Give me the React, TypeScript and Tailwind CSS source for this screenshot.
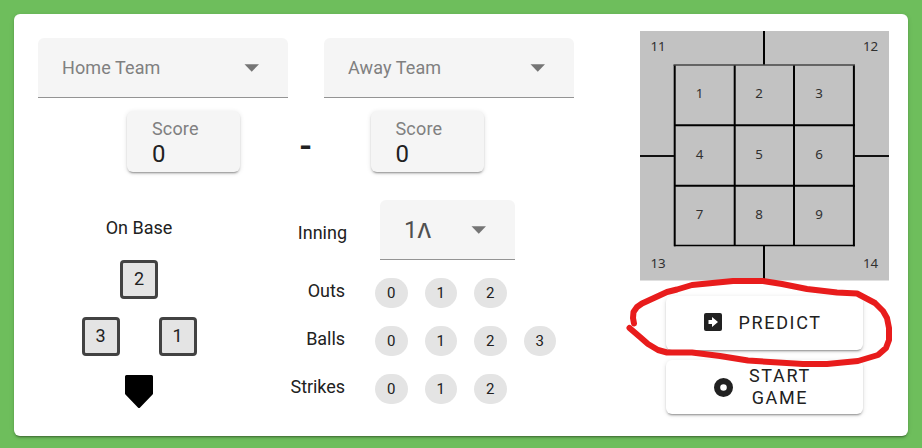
import React from "react";

const shadow =
  "shadow-[0_3px_1px_-2px_rgba(0,0,0,0.2),0_2px_2px_0_rgba(0,0,0,0.14),0_1px_5px_0_rgba(0,0,0,0.12)]";

function Caret() {
  return (
    <svg width="15" height="8" viewBox="0 0 15 8" className="shrink-0">
      <path d="M0.5 0.2h14.5L7.75 7.7z" fill="#757575" />
    </svg>
  );
}

function TeamSelect({ label }: { label: string }) {
  return (
    <div className="flex h-[60px] w-[250px] items-center justify-between rounded-t-md border-b border-[#949494] bg-[#f5f5f5] pr-[29px] pl-6">
      <span className="text-[18px] tracking-[0.1px] text-[#808080]">{label}</span>
      <Caret />
    </div>
  );
}

function ScoreField() {
  return (
    <div className={`flex h-[61px] w-[113px] flex-col rounded-md bg-[#f5f5f5] pt-2 pl-[24.5px] ${shadow}`}>
      <span className="text-[18px] leading-[20px] tracking-[0.2px] text-[#808080]">Score</span>
      <span className="text-[24px] leading-[30px] text-[#212121]">0</span>
    </div>
  );
}

function Base({ n }: { n: number }) {
  return (
    <button className="flex h-[39px] w-[38px] items-center justify-center rounded border-[3px] border-[#424242] bg-[#e4e4e4] pb-[3px] text-[18px]">
      {n}
    </button>
  );
}

function CountRow({ label, count }: { label: string; count: number }) {
  return (
    <div className="flex h-12 items-center">
      <span className="w-[69px] pb-[5px] text-right text-[18px] tracking-[-0.05px]">{label}</span>
      <div className="ml-[30px] flex gap-[17px]">
        {Array.from({ length: count }, (_, i) => (
          <span
            key={i}
            className="flex h-[30px] w-[32.5px] items-center justify-center rounded-full bg-[#e4e4e4] text-[15px]"
          >
            {i}
          </span>
        ))}
      </div>
    </div>
  );
}

function StrikeZone() {
  const labels: [string, number, number][] = [
    ["11", 18, 20], ["12", 230.5, 20], ["13", 18, 237], ["14", 230.5, 237],
    ["1", 59.5, 67], ["2", 119, 67], ["3", 179, 67],
    ["4", 59.5, 127.5], ["5", 119, 127.5], ["6", 179, 127.5],
    ["7", 59.5, 188], ["8", 119, 188], ["9", 179, 188],
  ];
  return (
    <svg width="249" height="250" viewBox="0 0 249 250" className="block">
      <rect width="249" height="249.5" fill="#c2c2c2" />
      <g stroke="#000" strokeWidth="2" fill="none">
        <path d="M34.7 34V215.3M94.7 34V215M154 34V215M213.9 34V215.3M34 94.2H215M34 154.7H215M124 0V34M124 215V250" />
        <path d="M34 214.6H214.8" strokeWidth="1.5" />
        <path d="M33.5 34H215" stroke="#444" strokeWidth="1.7" />
        <path d="M0 125H34M214 125H249" stroke="#111" strokeWidth="1.8" />
      </g>
      <g fill="#303030" fontSize="13.3" fontWeight="400" fontFamily="'Noto Sans','Open Sans',sans-serif" textAnchor="middle">
        {labels.map(([t, x, y]) => (
          <text key={t} x={x} y={y}>{t}</text>
        ))}
      </g>
    </svg>
  );
}

export default function App() {
  return (
    <div className="relative h-[448px] w-[922px] bg-[#6ebe5c] p-[14px] font-['Roboto',sans-serif] text-[#212121]">
      <main className={`flex h-[422px] w-[894px] rounded-md bg-white pl-6 ${shadow}`}>
        <section className="w-[602px] pt-6">
          <div className="flex gap-9">
            <TeamSelect label="Home Team" />
            <TeamSelect label="Away Team" />
          </div>
          <div className="mt-[13px] ml-[89.4px] flex">
            <ScoreField />
            <div className="flex w-[130.6px] justify-center">
              <span className="mt-[18px] text-[36px] leading-[36px] font-medium">-</span>
            </div>
            <ScoreField />
          </div>
          <div className="mt-7 flex">
            <div className="flex w-[202px] flex-col items-center pt-[17px]">
              <h2 className="text-[18px] leading-[22px]">On Base</h2>
              <div className="mt-[21px]"><Base n={2} /></div>
              <div className="mt-[18px] flex gap-[39px]">
                <Base n={3} />
                <Base n={1} />
              </div>
              <svg width="30" height="34" viewBox="0 0 30 34" className="mt-[19px]">
                <path d="M2.5 1.5h25v17L15 31.5 2.5 18.5z" fill="#000" stroke="#000" strokeWidth="3" strokeLinejoin="round" />
              </svg>
            </div>
            <div className="ml-[36px]">
              <div className="flex h-[60px] items-center">
                <span className="w-[71px] pt-1 text-right text-[18px]">Inning</span>
                <div className="ml-[33px] flex h-[60px] w-[135px] items-center justify-between rounded-t-md border-b border-[#949494] bg-[#f5f5f5] pr-[29px] pl-6">
                  <span className="text-[24px] leading-[30px] text-[#505050]">1<span className="text-[27px] font-light">ʌ</span></span>
                  <Caret />
                </div>
              </div>
              <div className="mt-[9px]">
                <CountRow label="Outs" count={3} />
                <CountRow label="Balls" count={4} />
                <CountRow label="Strikes" count={3} />
              </div>
            </div>
          </div>
        </section>
        <aside className="w-[249px] pt-[17px]">
          <StrikeZone />
          <div className="mt-[15px] ml-[26px] flex w-[197px] flex-col gap-[10px]">
            <button className={`flex h-[54px] items-center rounded-md bg-white pl-[38px] text-[18px] font-[450] tracking-[1.65px] ${shadow}`}>
              <svg width="18" height="18" viewBox="0 0 18 18" className="mb-[2px]">
                <rect width="18" height="18" rx="2" fill="#212121" />
                <path d="M4.5 7H8V4l6 5-6 5v-3H4.5z" fill="#fff" />
              </svg>
              <span className="ml-[16.5px] pb-[2px]">PREDICT</span>
            </button>
            <button className={`flex h-[54px] items-center rounded-md bg-white pl-12 text-[18px] leading-[22px] font-[450] tracking-[1.65px] ${shadow}`}>
              <svg width="19" height="19" viewBox="0 0 19 19">
                <circle cx="9.5" cy="9.5" r="6.4" fill="none" stroke="#212121" strokeWidth="6.2" />
              </svg>
              <span className="ml-4 text-center">START<br />GAME</span>
            </button>
          </div>
        </aside>
      </main>
      <svg width="922" height="448" viewBox="0 0 922 448" className="pointer-events-none absolute top-0 left-0">
        <path
          d="M634 323.5L633 318 633.5 312 637 307 642 303.5 667 292 677 289.5 692 285 733 281 763 281 782 284 807 289 837 292.5 857 293.5 875 303 883 311 887 318 889 328 889 340 886 348 878 355 858 361 827 364 803 364 748 360.5 720 356 692 352.5 667 352.5 658 350 648 344 640 337 629.5 328"
          fill="none"
          stroke="#e81c1c"
          strokeWidth="6"
          strokeLinecap="round"
          strokeLinejoin="round"
        />
      </svg>
    </div>
  );
}
